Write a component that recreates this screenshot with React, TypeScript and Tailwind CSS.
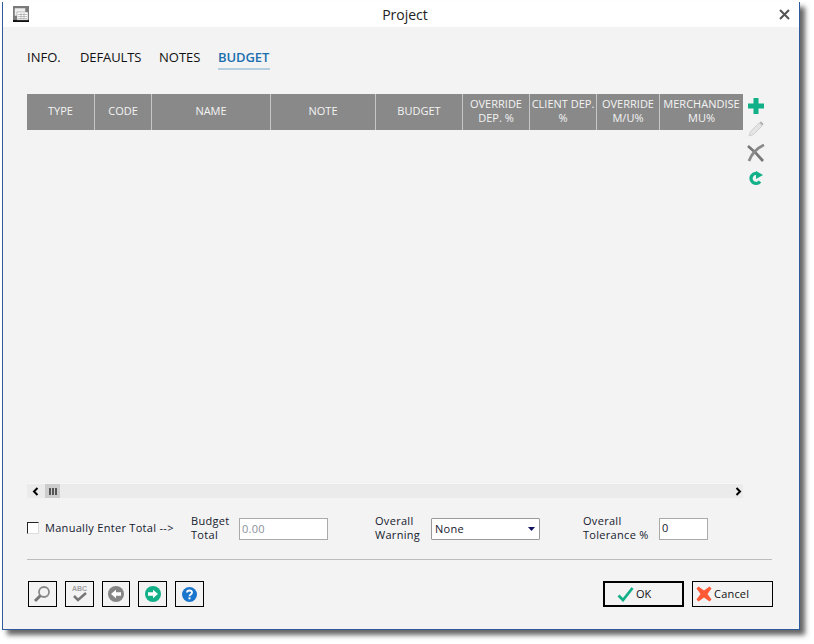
import React from "react";

const cols = [
  { w: "w-[68px]", t: "TYPE" },
  { w: "w-[57px]", t: "CODE" },
  { w: "w-[119px]", t: "NAME" },
  { w: "w-[105px]", t: "NOTE" },
  { w: "w-[87px]", t: "BUDGET" },
  { w: "w-[67px]", t: "OVERRIDE DEP. %" },
  { w: "w-[67px]", t: "CLIENT DEP. %" },
  { w: "w-[63px]", t: "OVERRIDE M/U%" },
  { w: "w-[83px]", t: "MERCHANDISE MU%" },
];

function ToolBtn({ ml, w, children }: { ml: string; w: string; children: React.ReactNode }) {
  return (
    <div className={`${ml} ${w} h-[26px] border border-black flex items-center justify-center`}>{children}</div>
  );
}

export default function App() {
  return (
    <div className="w-[814px] h-[644px] bg-white pl-[2px] pt-[2px] overflow-hidden font-['Open_Sans','Noto_Sans',sans-serif] text-[#14202e]">
      <div className="w-[798px] h-[628px] bg-[#f3f3f3] border-l border-r border-b border-[#2f5a9e] flex flex-col shadow-[5px_5px_5px_#666]">
        {/* Title bar */}
        <div className="h-[25px] bg-white flex items-center relative shrink-0">
          <svg className="ml-[10px]" width="17" height="17" viewBox="0 0 17 17">
            <rect x="0" y="0" width="16" height="16" fill="#7a7a7a" />
            <rect x="0" y="14" width="16" height="2" fill="#111" />
            <rect x="1.5" y="2" width="11" height="8" fill="#eee" stroke="#777" strokeWidth="0.5" />
            <rect x="4" y="6" width="11" height="8" fill="#fff" stroke="#888" strokeWidth="0.5" />
            <path d="M5 8.500h9M5 10.500h9M5 12.500h9M8 7v6M11 7v6" stroke="#999" strokeWidth="0.6" />
          </svg>
          <span className="absolute left-0 right-[0px] text-center text-[14px] leading-[25px] text-[#222] pl-[8px]">Project</span>
          <svg className="absolute right-[9px] top-[7px]" width="11" height="11" viewBox="0 0 11 11">
            <path d="M1 1L10 10M10 1L1 10" stroke="#555" strokeWidth="2" />
          </svg>
        </div>

        {/* Tabs */}
        <div className="flex mt-[20px] ml-[24px] h-[24px] shrink-0 text-[13px] leading-[20px] text-[#111111]">
          <div className="w-[53px]">INFO.</div>
          <div className="w-[79px] tracking-[-0.1px]">DEFAULTS</div>
          <div className="w-[59px]">NOTES</div>
          <div className="w-[52px] h-[23px] border-b-2 border-[#b5cfe0] text-[#1a6fb0] font-semibold tracking-[-0.1px]">BUDGET</div>
        </div>

        {/* Grid */}
        <div className="flex ml-[24px] mt-[23px] shrink-0">
          <div className="flex h-[36px] w-[716px] bg-[#898989] text-[#f4f4f4] text-[11px] leading-[14px]">
            {cols.map((c, i) => (
              <div
                key={c.t}
                className={`${c.w} ${i < cols.length - 1 ? "border-r border-[#c6c6c6]" : ""} flex items-center justify-center text-center pb-[2px]`}
              >
                <span>{c.t}</span>
              </div>
            ))}
          </div>
          <div className="ml-[5px] flex flex-col items-center w-[16px]">
            <svg className="mt-[4px]" width="16" height="16" viewBox="0 0 16 16">
              <path d="M5.500 0h5v5.500H16v5h-5.500V16h-5v-5.500H0v-5h5.500z" fill="#12b088" />
            </svg>
            <svg className="mt-[7px]" width="16" height="16" viewBox="0 0 16 16">
              <path d="M1 15L2.500 10.500L11 2L14 5L5.500 13.500z" fill="#e4e4e4" stroke="#cfcfcf" />
              <path d="M11.500 1.500L13 0.500L15.500 3L14.500 4.500z" fill="#a8a8a8" />
            </svg>
            <svg className="mt-[7px] shrink-0" width="18" height="18" viewBox="0 0 18 18">
              <path d="M1 2C6 6 11 11 16 17" stroke="#777" strokeWidth="2.800" fill="none" />
              <path d="M17 1C10 4 5 9 2 17" stroke="#8a8a8a" strokeWidth="2.800" fill="none" />
            </svg>
            <svg className="mt-[8px]" width="16" height="16" viewBox="0 0 16 16">
              <path d="M12 11.500A5 5 0 1 1 8.500 3.500" fill="none" stroke="#12b088" strokeWidth="3.200" />
              <path d="M8 1L15 5L8 9z" fill="#12b088" />
            </svg>
          </div>
        </div>

        {/* Empty grid body then scrollbar */}
        <div className="flex-1 flex flex-col justify-end ml-[24px]">
          <div className="w-[716px] h-[15px] bg-[#ebebeb] border-t border-[#f7f7f7] flex items-center text-[#111]">
            <svg className="ml-[5px]" width="7" height="9" viewBox="0 0 7 9">
              <path d="M5.500 1L2 4.500L5.500 8" fill="none" stroke="#000" strokeWidth="2" />
            </svg>
            <div className="ml-[6px] w-[15px] h-[14px] bg-[#cdcdcd] flex items-center justify-center gap-[1px]">
              <i className="block w-[2px] h-[7px] bg-[#555]" />
              <i className="block w-[2px] h-[7px] bg-[#555]" />
              <i className="block w-[2px] h-[7px] bg-[#555]" />
            </div>
            <svg className="ml-auto mr-[1px]" width="7" height="9" viewBox="0 0 7 9">
              <path d="M1.500 1L5 4.500L1.500 8" fill="none" stroke="#000" strokeWidth="2" />
            </svg>
          </div>
        </div>

        {/* Form row */}
        <div className="flex items-center h-[30px] mt-[15px] ml-[24px] text-[11px] leading-[14px] shrink-0 tracking-[0.3px]">
          <div className="w-[12px] h-[12px] bg-white border border-[#222] border-r-[#ddd] border-b-[#ddd] shrink-0" />
          <div className="ml-[6px] w-[146px] whitespace-nowrap">Manually Enter Total --&gt;</div>
          <div className="w-[48px]">Budget<br />Total</div>
          <div className="w-[89px] h-[22px] mt-[1px] bg-white border border-[#aaa] text-[#8a9199] pl-[2px] leading-[20px] text-[11px]">0.00</div>
          <div className="ml-[47px] w-[56px]">Overall<br />Warning</div>
          <div className="w-[109px] h-[22px] mt-[1px] bg-white border border-[#999] rounded-[1px] flex items-center pl-[3px] pr-[4px]">
            <span>None</span>
            <svg className="ml-auto" width="7" height="4" viewBox="0 0 7 4"><path d="M0 0h7L3.500 4z" fill="#101060" /></svg>
          </div>
          <div className="ml-[43px] w-[76px]">Overall<br />Tolerance %</div>
          <div className="w-[49px] h-[22px] mt-[1px] bg-white border border-[#aaa] pl-[2px] leading-[18px]">0</div>
        </div>

        {/* Divider */}
        <div className="h-[1px] bg-[#bdbdbd] ml-[24px] mr-[27px] mt-[16px] shrink-0" />

        {/* Buttons */}
        <div className="flex mt-[21px] mb-[22px] ml-[25px] shrink-0">
          <ToolBtn ml="" w="w-[29px]">
            <svg className="-ml-[2px]" width="18" height="18" viewBox="0 0 18 18">
              <circle cx="11" cy="7" r="5" fill="none" stroke="#8a8a8a" strokeWidth="1.800" />
              <path d="M7.500 10.500L2 16" stroke="#777" strokeWidth="3" />
            </svg>
          </ToolBtn>
          <ToolBtn ml="ml-[8px]" w="w-[29px]">
            <svg width="20" height="20" viewBox="0 0 20 20">
              <text x="2" y="7" fontSize="7" fontWeight="700" fill="#a0a0a0" fontFamily="Liberation Sans">ABC</text>
              <path d="M4 12L8 16L16 9" fill="none" stroke="#777" strokeWidth="2.500" />
            </svg>
          </ToolBtn>
          <ToolBtn ml="ml-[8px]" w="w-[28px]">
            <svg width="16" height="16" viewBox="0 0 16 16">
              <circle cx="8" cy="8" r="8" fill="#858585" />
              <path d="M3 8L8 3.800V6.200H13V9.800H8V12.200z" fill="#fff" />
            </svg>
          </ToolBtn>
          <ToolBtn ml="ml-[8px]" w="w-[29px]">
            <svg width="16" height="16" viewBox="0 0 16 16">
              <circle cx="8" cy="8" r="8" fill="#12b088" />
              <path d="M13 8L8 3.800V6.200H3V9.800H8V12.200z" fill="#fff" />
            </svg>
          </ToolBtn>
          <ToolBtn ml="ml-[8px]" w="w-[29px]">
            <svg width="15" height="15" viewBox="0 0 15 15">
              <circle cx="7.500" cy="7.500" r="7.500" fill="#1a75cc" />
              <path d="M5 5.600C5 2.800 10 2.800 10 5.600C10 7.500 7.500 7.500 7.500 9.200" fill="none" stroke="#fff" strokeWidth="1.800" />
              <rect x="6.500" y="10.300" width="2" height="2" fill="#fff" />
            </svg>
          </ToolBtn>
          <div className="ml-[399px] w-[81px] h-[26px] border-2 border-black flex items-center text-[11px] text-[#111]">
            <svg className="ml-[12px]" width="17" height="15" viewBox="0 0 17 15">
              <path d="M1.500 8.500L6 13L15.500 1" fill="none" stroke="#12b088" strokeWidth="2.800" />
            </svg>
            <span className="ml-[2px]">OK</span>
          </div>
          <div className="ml-[8px] w-[81px] h-[26px] border border-black flex items-center text-[11px] text-[#111]">
            <svg className="ml-[3px]" width="16" height="16" viewBox="0 0 16 16">
              <path d="M2.500 0.500L8 4.500L13.500 0.500L15.500 2.500L11.500 8L15.500 13.500L13.500 15.500L8 11.500L2.500 15.500L0.500 13.500L4.500 8L0.500 2.500z" fill="#ff5a36" />
            </svg>
            <span className="ml-[2px] tracking-[0.2px]">Cancel</span>
          </div>
        </div>
      </div>
    </div>
  );
}
